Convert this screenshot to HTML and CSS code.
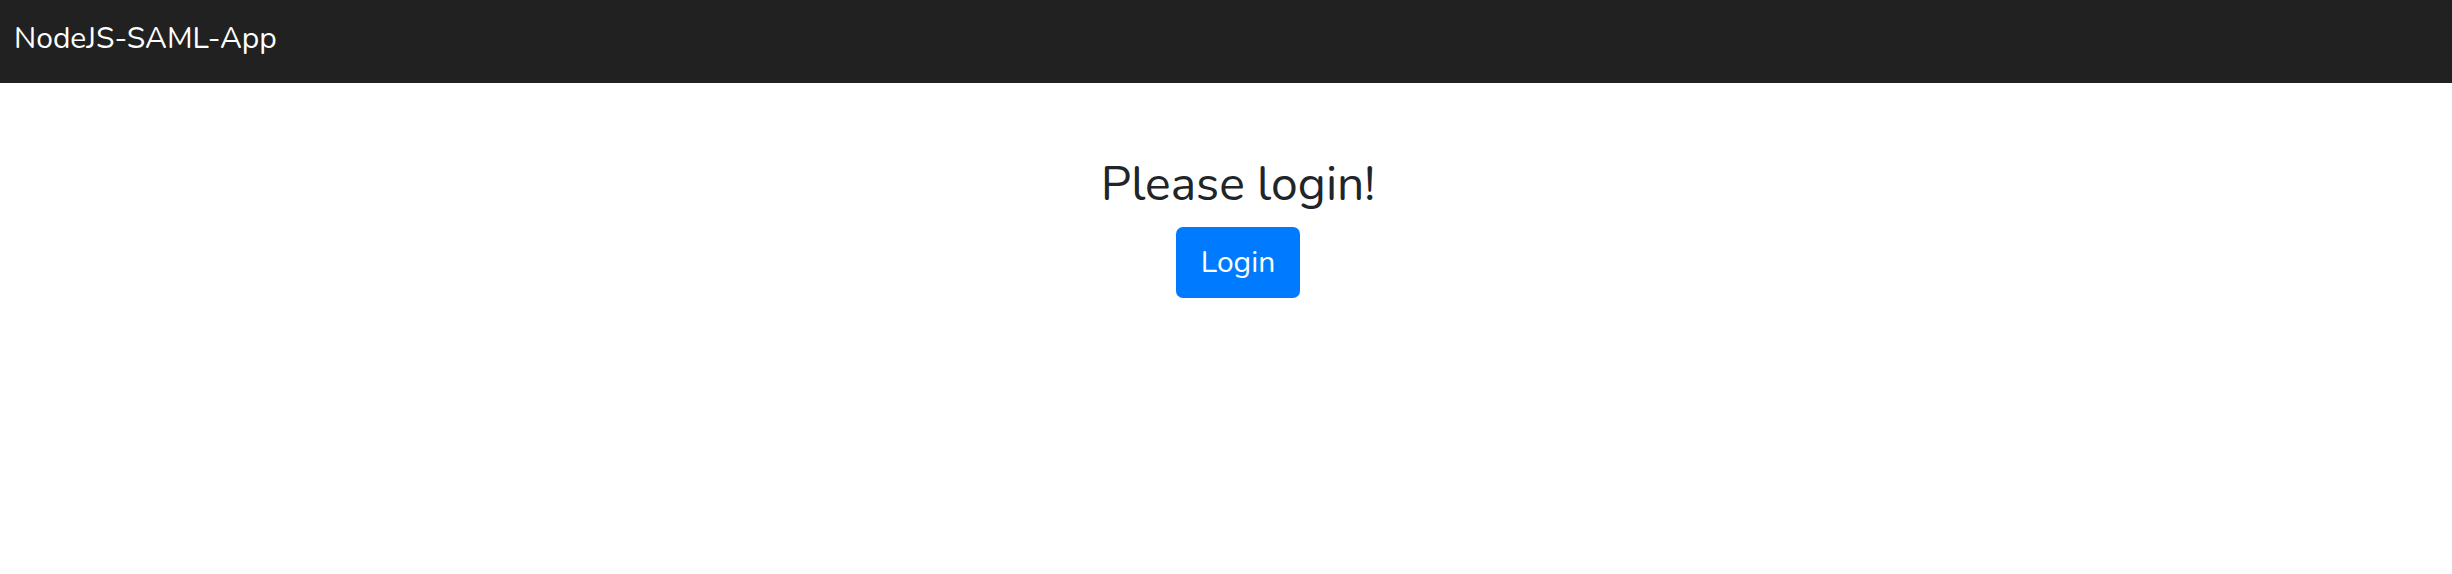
FILE: index.html
```
<!DOCTYPE html>
<html>
<head>
<meta charset="utf-8">
<link rel="stylesheet" href="styles.css">
</head>
<body>
<nav class="navbar">
  <a class="brand" href="#">NodeJS-SAML-App</a>
</nav>
<main class="content">
  <h2 class="title">Please login!</h2>
  <a class="btn" href="#">Login</a>
</main>
</body>
</html>
```
FILE: styles.css
```
html, body {
  margin: 0;
  padding: 0;
  background: #fff;
  font-family: "Nunito", "Noto Sans", "Open Sans", sans-serif;
  color: #212529;
}
.navbar {
  background: #212121;
  height: 83px;
  display: flex;
  align-items: center;
  padding: 0 14px;
}
.brand {
  color: #fff;
  text-decoration: none;
  font-size: 30px;
  line-height: 1;
  margin-top: -5px;
}
.content {
  display: flex;
  flex-direction: column;
  align-items: center;
  padding-top: 73px;
  padding-left: 24px;
}
.title {
  margin: 0 0 13px;
  font-weight: 400;
  font-size: 48px;
  line-height: 1.2;
}
.btn {
  display: inline-flex;
  align-items: center;
  justify-content: center;
  background: #007bff;
  color: #fff;
  text-decoration: none;
  font-size: 30px;
  height: 71px;
  width: 124px;
  border-radius: 7px;
  box-sizing: border-box;
}
```
